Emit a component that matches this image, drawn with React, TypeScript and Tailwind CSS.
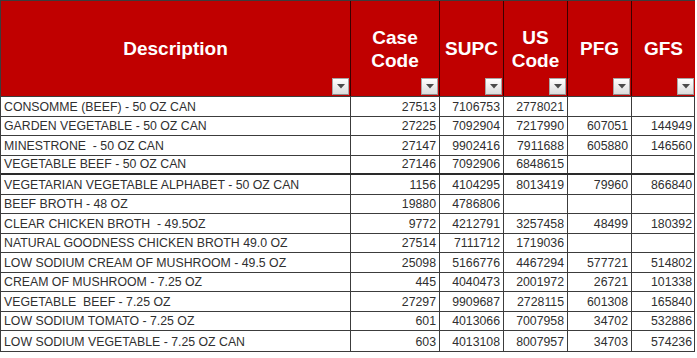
import React from "react";

type Row = {
  desc: string;
  caseCode: string;
  supc: string;
  us: string;
  pfg: string;
  gfs: string;
};

const rows: Row[] = [
  { desc: "CONSOMME (BEEF) - 50 OZ CAN", caseCode: "27513", supc: "7106753", us: "2778021", pfg: "", gfs: "" },
  { desc: "GARDEN VEGETABLE - 50 OZ CAN", caseCode: "27225", supc: "7092904", us: "7217990", pfg: "607051", gfs: "144949" },
  { desc: "MINESTRONE  - 50 OZ CAN", caseCode: "27147", supc: "9902416", us: "7911688", pfg: "605880", gfs: "146560" },
  { desc: "VEGETABLE BEEF - 50 OZ CAN", caseCode: "27146", supc: "7092906", us: "6848615", pfg: "", gfs: "" },
  { desc: "VEGETARIAN VEGETABLE ALPHABET - 50 OZ CAN", caseCode: "1156", supc: "4104295", us: "8013419", pfg: "79960", gfs: "866840" },
  { desc: "BEEF BROTH - 48 OZ", caseCode: "19880", supc: "4786806", us: "", pfg: "", gfs: "" },
  { desc: "CLEAR CHICKEN BROTH  - 49.5OZ", caseCode: "9772", supc: "4212791", us: "3257458", pfg: "48499", gfs: "180392" },
  { desc: "NATURAL GOODNESS CHICKEN BROTH 49.0 OZ", caseCode: "27514", supc: "7111712", us: "1719036", pfg: "", gfs: "" },
  { desc: "LOW SODIUM CREAM OF MUSHROOM - 49.5 OZ", caseCode: "25098", supc: "5166776", us: "4467294", pfg: "577721", gfs: "514802" },
  { desc: "CREAM OF MUSHROOM - 7.25 OZ", caseCode: "445", supc: "4040473", us: "2001972", pfg: "26721", gfs: "101338" },
  { desc: "VEGETABLE  BEEF - 7.25 OZ", caseCode: "27297", supc: "9909687", us: "2728115", pfg: "601308", gfs: "165840" },
  { desc: "LOW SODIUM TOMATO - 7.25 OZ", caseCode: "601", supc: "4013066", us: "7007958", pfg: "34702", gfs: "532886" },
  { desc: "LOW SODIUM VEGETABLE - 7.25 OZ CAN", caseCode: "603", supc: "4013108", us: "8007957", pfg: "34703", gfs: "574236" },
];

const cols = "grid grid-cols-[350px_89px_64px_64px_64px_63px]";

const FilterButton = () => (
  <div className="absolute right-[1px] bottom-[1px] flex h-[17px] w-[17px] items-center justify-center border border-[#a7a7a7] border-b-[#8a8a8a] bg-gradient-to-b from-[#ffffff] to-[#dcdcdc]">
    <svg width="8" height="5" viewBox="0 0 8 5">
      <path d="M0 0 L8 0 L4 4.5 Z" fill="#4a4a4a" />
    </svg>
  </div>
);

const HeaderCell = ({ lines, last }: { lines: string[]; last?: boolean }) => (
  <div
    className={`relative flex h-[95px] flex-col items-center justify-center bg-[#c00000] text-[19px] font-bold leading-[23px] text-white ${
      last ? "" : "border-r border-[#3a0000]"
    }`}
  >
    {lines.map((l) => (
      <span key={l}>{l}</span>
    ))}
    <FilterButton />
  </div>
);

const Cell = ({ v, left, last }: { v: string; left?: boolean; last?: boolean }) => (
  <div
    className={`flex items-end overflow-hidden whitespace-pre pb-[1px] ${
      left ? "justify-start pl-[3px]" : "justify-end pr-[3px]"
    } ${last ? "" : "border-r border-[#3c3c3c]"}`}
  >
    {v}
  </div>
);

export default function App() {
  return (
    <div className="h-[358px] w-[697px] bg-white">
      <div className="w-[695px] border border-[#3c3c3c] font-['Liberation_Sans',Arial,sans-serif]">
        <div className={`${cols} border-b border-[#3c3c3c]`}>
          <HeaderCell lines={["Description"]} />
          <HeaderCell lines={["Case", "Code"]} />
          <HeaderCell lines={["SUPC"]} />
          <HeaderCell lines={["US", "Code"]} />
          <HeaderCell lines={["PFG"]} />
          <HeaderCell lines={["GFS"]} last />
        </div>
        {rows.map((r, i) => (
          <div
            key={r.desc}
            className={`${cols} text-[12.3px] leading-[15px] text-[#2f2f2f] ${
              i === rows.length - 1 ? "" : i === 3 ? "border-b-2 border-[#2a2a2a]" : "border-b border-[#3c3c3c]"
            } ${i % 2 === 0 ? "h-[20px]" : "h-[19px]"}`}
          >
            <Cell v={r.desc} left />
            <Cell v={r.caseCode} />
            <Cell v={r.supc} />
            <Cell v={r.us} />
            <Cell v={r.pfg} />
            <Cell v={r.gfs} last />
          </div>
        ))}
      </div>
    </div>
  );
}
